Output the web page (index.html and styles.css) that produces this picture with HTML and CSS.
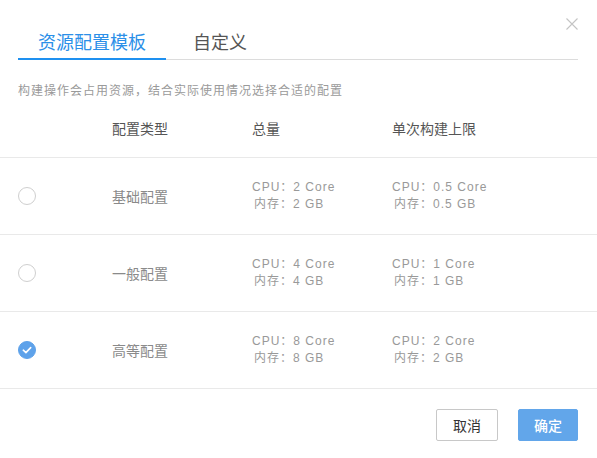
FILE: index.html
```html
<!DOCTYPE html>
<html lang="zh-CN">
<head>
<meta charset="utf-8">
<title>资源配置</title>
<link rel="stylesheet" href="styles.css">
</head>
<body>
<div class="dialog">
  <button class="close" aria-label="关闭">
    <svg width="12" height="12" viewBox="0 0 12 12"><path d="M0.5 0.5L11.5 11.5M11.5 0.5L0.5 11.5" stroke="#c4c4c4" stroke-width="1.1" fill="none"/></svg>
  </button>
  <div class="tabs">
    <div class="tab active">资源配置模板</div>
    <div class="tab">自定义</div>
  </div>
  <p class="desc">构建操作会占用资源，结合实际使用情况选择合适的配置</p>
  <div class="table">
    <div class="row head">
      <div class="cell"></div>
      <div class="cell">配置类型</div>
      <div class="cell">总量</div>
      <div class="cell">单次构建上限</div>
    </div>
    <div class="row">
      <div class="cell"><span class="radio"></span></div>
      <div class="cell name">基础配置</div>
      <div class="cell val"><span>CPU：2 Core</span><span class="mem">内存：2 GB</span></div>
      <div class="cell val"><span>CPU：0.5 Core</span><span class="mem">内存：0.5 GB</span></div>
    </div>
    <div class="row">
      <div class="cell"><span class="radio"></span></div>
      <div class="cell name">一般配置</div>
      <div class="cell val"><span>CPU：4 Core</span><span class="mem">内存：4 GB</span></div>
      <div class="cell val"><span>CPU：1 Core</span><span class="mem">内存：1 GB</span></div>
    </div>
    <div class="row">
      <div class="cell"><span class="radio checked"><svg width="10" height="8" viewBox="0 0 10 8"><path d="M1.3 4.2L3.9 6.6L8.7 1.6" stroke="#fff" stroke-width="1.6" fill="none" stroke-linecap="round" stroke-linejoin="round"/></svg></span></div>
      <div class="cell name">高等配置</div>
      <div class="cell val"><span>CPU：8 Core</span><span class="mem">内存：8 GB</span></div>
      <div class="cell val"><span>CPU：2 Core</span><span class="mem">内存：2 GB</span></div>
    </div>
  </div>
  <div class="footer">
    <button class="btn">取消</button>
    <button class="btn primary">确定</button>
  </div>
</div>
</body>
</html>
```
FILE: styles.css
```css
* { box-sizing: border-box; }
html, body {
  margin: 0;
  padding: 0;
  background: #fff;
}
body {
  font-family: "Liberation Sans", "Noto Sans CJK SC", sans-serif;
  color: #333;
}
.dialog {
  position: relative;
  width: 597px;
  height: 458px;
  padding-top: 29px;
}
.close {
  position: absolute;
  top: 18px;
  right: 19px;
  width: 12px;
  height: 12px;
  padding: 0;
  border: 0;
  background: none;
  display: flex;
}
.tabs {
  display: flex;
  gap: 7px;
  margin: 0 19px 0 18px;
  border-bottom: 1px solid #dcdcdc;
}
.tab {
  font-family: "Noto Sans CJK SC", sans-serif;
  font-size: 18px;
  line-height: 24px;
  padding: 0 20px 5px;
  color: #555;
  border-bottom: 2px solid transparent;
  margin-bottom: -1px;
}
.tab.active {
  color: #2b8fe8;
  border-bottom-color: #1e90f0;
}
.desc {
  margin: 21px 0 0 18px;
  font-family: "Noto Sans CJK SC", sans-serif;
  font-size: 12px;
  line-height: 17px;
  letter-spacing: 1px;
  color: #9a9a9a;
}
.row {
  display: grid;
  grid-template-columns: 112px 140px 140px 1fr;
  align-items: center;
  height: 77px;
  border-bottom: 1px solid #e9e9e9;
}
.row.head {
  height: 60px;
  font-family: "Noto Sans CJK SC", sans-serif;
  font-size: 14px;
  color: #555;
}
.cell:first-child {
  padding-left: 18px;
  display: flex;
}
.name {
  font-family: "Noto Sans CJK SC", sans-serif;
  font-size: 14px;
  color: #8a8a8a;
}
.val {
  display: flex;
  flex-direction: column;
  font-size: 12px;
  line-height: 17px;
  letter-spacing: 1px;
  color: #999;
}
.mem {
  padding-left: 2px;
}
.radio {
  width: 18px;
  height: 18px;
  border-radius: 50%;
  border: 1px solid #cfcfcf;
  background: #fff;
  display: flex;
  align-items: center;
  justify-content: center;
}
.radio.checked {
  background: #5ea2ea;
  border-color: #5ea2ea;
}
.footer {
  display: flex;
  justify-content: flex-end;
  gap: 20px;
  padding: 20px 19px 0 0;
}
.btn {
  height: 32px;
  width: 62px;
  border: 1px solid #c8c8c8;
  border-radius: 2px;
  background: #fff;
  font-family: "Noto Sans CJK SC", sans-serif;
  font-size: 14px;
  color: #333;
  padding: 0;
}
.btn.primary {
  width: 60px;
  background: #62a6ea;
  border-color: #62a6ea;
  color: #fff;
  font-weight: 500;
}
```
